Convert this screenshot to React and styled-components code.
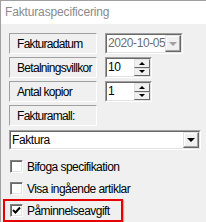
import React from "react";
import styled, { createGlobalStyle } from "styled-components";

const Global = createGlobalStyle`
  html, body { margin: 0; padding: 0; background: #f0f0f0; }
  * { box-sizing: border-box; }
`;

const Frame = styled.div`
  width: 206px;
  height: 222px;
  border-top: 1px solid #a0a0a0;
  border-left: 1px solid #a0a0a0;
  background: #f0f0f0;
  font-family: "Liberation Sans", Arial, sans-serif;
  font-size: 12px;
  letter-spacing: -0.7px;
  color: #000;
  overflow: hidden;
  position: relative;
`;

const Header = styled.div`
  height: 23px;
  background: #fff;
  padding-left: 4px;
  line-height: 23px;
  font-size: 12px;
  letter-spacing: -0.15px;
  color: #8a8a8a;
`;

const Body = styled.div`
  padding: 9px 0 0 8px;
  display: flex;
  flex-direction: column;
`;

const Rows = styled.div`
  display: flex;
  flex-direction: column;
  gap: 3px;
`;

const Row = styled.div`
  display: flex;
  gap: 8px;
  height: 21px;
`;

const Label = styled.div`
  width: 88px;
  height: 21px;
  border: 1px solid;
  border-color: #a0a0a0 #fff #fff #a0a0a0;
  padding-left: 7px;
  line-height: 19px;
  padding-top: 1px;
  white-space: nowrap;
`;

const Sunken = styled.div`
  position: relative;
  width: ${(p) => p.$w}px;
  height: ${(p) => p.$h || 21}px;
  border: 1px solid;
  border-color: #a0a0a0 #fff #fff #a0a0a0;
  background: #fff;
  display: flex;
`;

const Inner = styled.div`
  flex: 1;
  display: flex;
  border: 1px solid;
  border-color: #696969 #e3e3e3 #e3e3e3 #696969;
  background: #fff;
  color: ${(p) => (p.$disabled ? "#6d6d6d" : "#000")};
  min-width: 0;
`;

const Value = styled.div`
  flex: 1;
  padding-left: 1px;
  line-height: 16px;
  font-size: 12px;
  letter-spacing: -0.4px;
  white-space: nowrap;
  overflow: hidden;
  min-width: 0;
`;

const DropBtn = styled.div`
  flex: none;
  width: 16px;
  border: 1px solid;
  border-color: #e3e3e3 #696969 #696969 #e3e3e3;
  box-shadow: inset -1px -1px #a0a0a0, inset 1px 1px #fff;
  background: #f0f0f0;
  display: flex;
  align-items: center;
  justify-content: center;
`;

const SpinBox = styled.div`
  flex: none;
  width: 16px;
  display: flex;
  flex-direction: column;
`;

const SpinBtn = styled.div`
  flex: 1;
  border: 1px solid;
  border-color: #e3e3e3 #696969 #696969 #e3e3e3;
  background: #f0f0f0;
  display: flex;
  align-items: center;
  justify-content: center;
`;

const Arrow = styled.div`
  width: 0;
  height: 0;
  border-left: ${(p) => p.$s}px solid transparent;
  border-right: ${(p) => p.$s}px solid transparent;
  ${(p) =>
    p.$up
      ? `border-bottom: ${p.$s}px solid ${p.$c};`
      : `border-top: ${p.$s}px solid ${p.$c};`}
`;

const Combo = styled(Sunken)`
  margin-top: 4px;
`;

const Checks = styled.div`
  display: flex;
  flex-direction: column;
  margin-top: 10px;
  gap: 9px;
`;

const CheckRow = styled.div`
  display: flex;
  align-items: center;
  gap: 4px;
  height: 13px;
  padding-left: 1px;
  position: relative;
  font-size: 12px;
  letter-spacing: -0.55px;
  white-space: nowrap;
`;

const Box = styled.div`
  flex: none;
  width: 13px;
  height: 13px;
  border: 1px solid;
  border-color: #808080 #fff #fff #808080;
  box-shadow: inset 1px 1px #696969, inset -1px -1px #e3e3e3;
  background: #fff;
  display: flex;
  align-items: center;
  justify-content: center;
`;

const Highlight = styled.div`
  position: absolute;
  left: -6px;
  top: -5px;
  width: 120px;
  height: 23px;
  border: 2px solid #e60000;
  box-shadow: 1px 1px 1px rgba(0, 0, 0, 0.25);
  pointer-events: none;
`;

function Check({ checked, children, highlight }) {
  return (
    <CheckRow>
      <Box>
        {checked && (
          <svg width="9" height="9" viewBox="0 0 9 9">
            <path d="M1 4 L3.5 6.5 L8 1.5" stroke="#000" strokeWidth="2" fill="none" />
          </svg>
        )}
      </Box>
      <span>{children}</span>
      {highlight && <Highlight />}
    </CheckRow>
  );
}

function Spinner({ value }) {
  return (
    <Sunken $w={47}>
      <Inner>
        <Value>{value}</Value>
        <SpinBox>
          <SpinBtn>
            <Arrow $up $s={3} $c="#000" />
          </SpinBtn>
          <SpinBtn>
            <Arrow $s={3} $c="#000" />
          </SpinBtn>
        </SpinBox>
      </Inner>
    </Sunken>
  );
}

export default function App() {
  return (
    <>
      <Global />
      <Frame>
        <Header>Fakturaspecificering</Header>
        <Body>
          <Rows>
            <Row>
              <Label>Fakturadatum</Label>
              <Sunken $w={78}>
                <Inner $disabled>
                  <Value>2020-10-05</Value>
                  <DropBtn>
                    <Arrow $s={4} $c="#a0a0a0" />
                  </DropBtn>
                </Inner>
              </Sunken>
            </Row>
            <Row>
              <Label>Betalningsvillkor</Label>
              <Spinner value="10" />
            </Row>
            <Row>
              <Label>Antal kopior</Label>
              <Spinner value="1" />
            </Row>
            <Row>
              <Label>Fakturamall:</Label>
            </Row>
          </Rows>
          <Combo $w={192} $h={20}>
            <Inner>
              <Value>Faktura</Value>
              <DropBtn>
                <Arrow $s={4} $c="#000" />
              </DropBtn>
            </Inner>
          </Combo>
          <Checks>
            <Check>Bifoga specifikation</Check>
            <Check>Visa ingående artiklar</Check>
            <Check checked highlight>
              Påminnelseavgift
            </Check>
          </Checks>
        </Body>
      </Frame>
    </>
  );
}
